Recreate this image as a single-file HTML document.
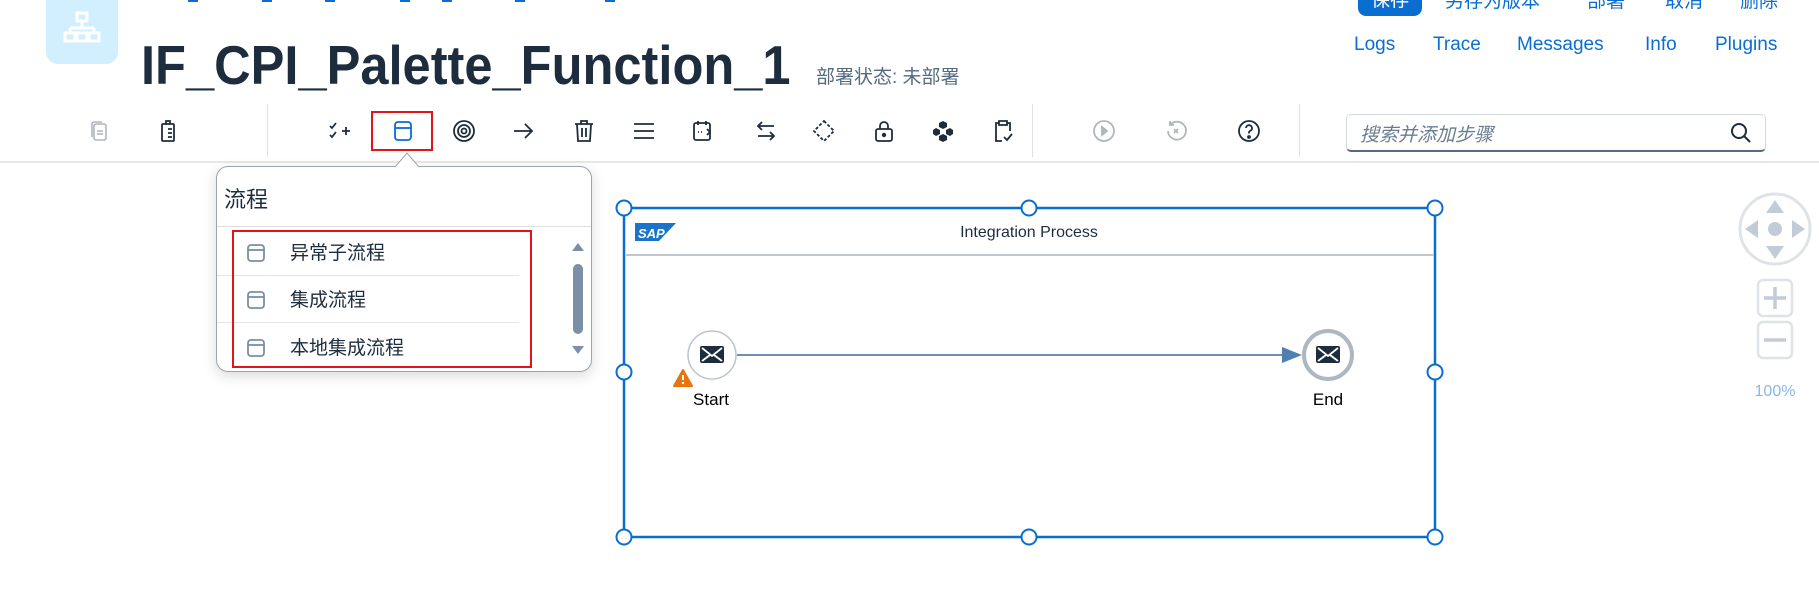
<!DOCTYPE html>
<html><head><meta charset="utf-8">
<style>
*{margin:0;padding:0;box-sizing:border-box}
body{width:1819px;height:614px;background:#fff;position:relative;overflow:hidden;font-family:"Liberation Sans","Noto Sans CJK SC",sans-serif}
.a{position:absolute;white-space:nowrap}
.lnk{color:#0a6ed1;font-size:19px;top:34px}
.top{color:#0a6ed1;font-size:19px;top:-14px}
.sep{position:absolute;top:104px;width:1px;height:53px;background:#e0e0e0}
.ic{position:absolute;top:119px;width:24px;height:24px}
.us{position:absolute;top:0;height:2px;width:10px;background:#0a6ed1}
</style></head><body>
<div class="us" style="left:188px"></div><div class="us" style="left:262px"></div><div class="us" style="left:325px"></div><div class="us" style="left:400px"></div><div class="us" style="left:442px"></div><div class="us" style="left:515px"></div><div class="us" style="left:605px"></div>
<div class="a" style="left:1358px;top:-10px;width:64px;height:26px;background:#0a6ed1;border-radius:8px;color:#fff;font-size:19px;text-align:center;line-height:22px">保存</div>
<div class="a top" style="left:1445px">另存为版本</div>
<div class="a top" style="left:1587px">部署</div>
<div class="a top" style="left:1665px">取消</div>
<div class="a top" style="left:1740px">删除</div>
<div class="a lnk" style="left:1354px">Logs</div>
<div class="a lnk" style="left:1433px">Trace</div>
<div class="a lnk" style="left:1517px">Messages</div>
<div class="a lnk" style="left:1645px">Info</div>
<div class="a lnk" style="left:1715px">Plugins</div>
<div class="a" style="left:46px;top:-10px;width:72px;height:74px;background:#d1efff;border-radius:12px"></div>
<svg class="a" style="left:62px;top:10px" width="40" height="40" viewBox="0 0 40 40" fill="none" stroke="#fff" stroke-width="3"><rect x="15" y="3" width="10" height="8"/><path d="M20 11v7M8 18h24M8 18v5M32 18v5"/><rect x="3" y="23" width="10" height="8"/><rect x="27" y="23" width="10" height="8"/><rect x="15" y="23" width="10" height="8"/></svg>
<div class="a" style="left:141px;top:34px;font-size:55px;font-weight:bold;color:#1d2d3e;transform:scaleX(0.92);transform-origin:left top;line-height:62px">IF_CPI_Palette_Function_1</div>
<div class="a" style="left:816px;top:62px;font-size:19px;color:#556b82">部署状态: 未部署</div>
<div class="sep" style="left:267px"></div>
<div class="sep" style="left:1032px"></div>
<div class="sep" style="left:1299px"></div>
<div class="a" style="left:0;top:161px;width:1819px;height:2px;background:#e8e8e8"></div>
<svg class="ic" style="left:87px" viewBox="0 0 24 24" fill="none" stroke="#b0b6bd" stroke-width="1.6"><rect x="7" y="5" width="12" height="16" rx="2"/><path d="M5 18V5a2 2 0 0 1 2-2h8M10 12h6M10 15h6"/></svg>
<svg class="ic" style="left:157px" viewBox="0 0 24 24" fill="none" stroke="#1d2d3e" stroke-width="1.8"><rect x="5" y="5" width="12" height="17" rx="1"/><path d="M9 5V2h4v3M11 10h4M11 14h4M11 18h4"/></svg>
<svg class="ic" style="left:328px" viewBox="0 0 24 24" fill="none" stroke="#1d2d3e" stroke-width="1.8"><path d="M2 7l2 2 4-5M2 16l2 2 4-5M14 12h8M18 8v8"/></svg>
<div class="a" style="left:371px;top:111px;width:62px;height:40px;border:2px solid #e3131b"></div>
<svg class="ic" style="left:391px" viewBox="0 0 24 24" fill="none" stroke="#0a6ed1" stroke-width="1.8"><rect x="4" y="3" width="16" height="18" rx="3"/><path d="M4 9h16"/></svg>
<svg class="ic" style="left:452px" viewBox="0 0 24 24" fill="none" stroke="#1d2d3e" stroke-width="1.8"><circle cx="12" cy="12" r="10"/><circle cx="12" cy="12" r="6"/><circle cx="12" cy="12" r="2.5"/></svg>
<svg class="ic" style="left:511px" viewBox="0 0 24 24" fill="none" stroke="#1d2d3e" stroke-width="1.8"><path d="M3 12h18M14 5l7 7-7 7"/></svg>
<svg class="ic" style="left:572px" viewBox="0 0 24 24" fill="none" stroke="#1d2d3e" stroke-width="1.8"><path d="M3 5h18M9 5V2h6v3M5 5l1 17h12l1-17M10 9v9M14 9v9"/></svg>
<svg class="ic" style="left:632px" viewBox="0 0 24 24" fill="none" stroke="#1d2d3e" stroke-width="1.8"><path d="M2 5h20M2 12h20M2 19h20"/></svg>
<svg class="ic" style="left:691px" viewBox="0 0 24 24" fill="none" stroke="#1d2d3e" stroke-width="1.8"><rect x="3" y="4" width="16" height="17" rx="2"/><path d="M7 2v4M15 2v4M7 13h1M10 13h1M16 10l3 3-3 3"/></svg>
<svg class="ic" style="left:754px" viewBox="0 0 24 24" fill="none" stroke="#1d2d3e" stroke-width="1.8"><path d="M20 7H4M8 3L4 7l4 4M4 17h16M16 13l4 4-4 4"/></svg>
<svg class="ic" style="left:812px" viewBox="0 0 24 24" fill="none" stroke="#1d2d3e" stroke-width="1.8" stroke-dasharray="3 2"><path d="M12 2l10 10-10 10L2 12z"/></svg>
<svg class="ic" style="left:872px" viewBox="0 0 24 24" fill="none" stroke="#1d2d3e" stroke-width="1.8"><rect x="4" y="10" width="16" height="12" rx="2"/><path d="M8 10V7a4 4 0 0 1 8 0v3"/><circle cx="12" cy="16" r="1.3" fill="#1d2d3e"/></svg>
<svg class="ic" style="left:931px" viewBox="0 0 24 24" fill="#1d2d3e"><path d="M12 2l4 2v4l-4 2-4-2V4zM5 9l4 2v4l-4 2-3-2v-4zM19 9l3 2v4l-3 2-4-2v-4zM12 15l4 2v4l-4 2-4-2v-4z"/></svg>
<svg class="ic" style="left:991px" viewBox="0 0 24 24" fill="none" stroke="#1d2d3e" stroke-width="1.8"><path d="M8 4H5v18h6M16 4h3v8M8 2h8v4H8zM13 18l3 3 5-6"/></svg>
<svg class="ic" style="left:1092px" viewBox="0 0 24 24" fill="none" stroke="#b0b6bd" stroke-width="1.8"><circle cx="12" cy="12" r="10"/><path d="M10 8l5 4-5 4z" fill="#b0b6bd"/></svg>
<svg class="ic" style="left:1164px" viewBox="0 0 24 24" fill="none" stroke="#b0b6bd" stroke-width="1.8"><path d="M6 6a9 9 0 1 1-2 6M6 2v4h4M10 10l4 4M14 10l-4 4"/></svg>
<svg class="ic" style="left:1237px" viewBox="0 0 24 24" fill="none" stroke="#1d2d3e" stroke-width="1.8"><circle cx="12" cy="12" r="10"/><path d="M9 9a3 3 0 1 1 4 3c-1 .5-1 1-1 2.5"/><circle cx="12" cy="18" r="1" fill="#1d2d3e"/></svg>
<div class="a" style="left:1346px;top:114px;width:420px;height:38px;border:1px solid #d5dadd;border-bottom:2px solid #556b82;border-radius:5px;background:#fff"></div>
<div class="a" style="left:1360px;top:120px;font-size:19px;font-style:italic;color:#6a7d8f">搜索并添加步骤</div>
<svg class="a" style="left:1730px;top:122px" width="22" height="22" viewBox="0 0 22 22" fill="none" stroke="#1d2d3e" stroke-width="2"><circle cx="9" cy="9" r="7"/><path d="M14 14l6 6"/></svg>
<div class="a" style="left:216px;top:166px;width:376px;height:206px;border:1px solid #9aa5b0;border-radius:12px;background:#fff;box-shadow:0 4px 14px rgba(0,0,0,.15)"></div>
<svg class="a" style="left:395px;top:152px" width="24" height="16" viewBox="0 0 24 16"><path d="M0 15L12 1l12 14" fill="#fff" stroke="#9aa5b0"/></svg>
<div class="a" style="left:224px;top:182px;font-size:22px;color:#1d2d3e">流程</div>
<div class="a" style="left:217px;top:226px;width:374px;height:1px;background:#ddd"></div>
<div class="a" style="left:217px;top:275px;width:302px;height:1px;background:#e5e5e5"></div>
<div class="a" style="left:217px;top:322px;width:302px;height:1px;background:#e5e5e5"></div>
<div class="a" style="left:232px;top:230px;width:300px;height:138px;border:2px solid #e3131b"></div>
<svg class="a" style="left:246px;top:243px" width="20" height="20" viewBox="0 0 20 20" fill="none" stroke="#7a8ea6" stroke-width="1.8"><rect x="2" y="2" width="16" height="16" rx="3"/><path d="M2 7h16"/></svg>
<svg class="a" style="left:246px;top:290px" width="20" height="20" viewBox="0 0 20 20" fill="none" stroke="#7a8ea6" stroke-width="1.8"><rect x="2" y="2" width="16" height="16" rx="3"/><path d="M2 7h16"/></svg>
<svg class="a" style="left:246px;top:338px" width="20" height="20" viewBox="0 0 20 20" fill="none" stroke="#7a8ea6" stroke-width="1.8"><rect x="2" y="2" width="16" height="16" rx="3"/><path d="M2 7h16"/></svg>
<div class="a" style="left:290px;top:238px;font-size:19px;color:#1d2d3e">异常子流程</div>
<div class="a" style="left:290px;top:285px;font-size:19px;color:#1d2d3e">集成流程</div>
<div class="a" style="left:290px;top:333px;font-size:19px;color:#1d2d3e">本地集成流程</div>
<svg class="a" style="left:570px;top:238px" width="16" height="122" viewBox="0 0 16 122" fill="#7b8fa6"><path d="M2 13L8 5l6 8z"/><rect x="3" y="26" width="10" height="70" rx="5"/><path d="M2 108l6 8 6-8z"/></svg>
<svg class="a" style="left:0;top:0" width="1819" height="614" viewBox="0 0 1819 614">
<rect x="624" y="208" width="811" height="329" fill="none" stroke="#0a6ed1" stroke-width="2.5"/>
<line x1="626" y1="255" x2="1434" y2="255" stroke="#bfc6cd" stroke-width="2"/>
<path d="M635 223h41l-17 18h-24z" fill="#1b74c9"/>
<text x="638" y="238" font-family="Liberation Sans" font-weight="bold" font-size="13" fill="#fff" font-style="italic">SAP</text>
<text x="1029" y="237" text-anchor="middle" font-family="Liberation Sans" font-size="16" fill="#1d2d3e">Integration Process</text>
<g fill="#fff" stroke="#0a6ed1" stroke-width="2">
<circle cx="624" cy="208" r="7.5"/><circle cx="1029" cy="208" r="7.5"/><circle cx="1435" cy="208" r="7.5"/>
<circle cx="624" cy="372" r="7.5"/><circle cx="1435" cy="372" r="7.5"/>
<circle cx="624" cy="537" r="7.5"/><circle cx="1029" cy="537" r="7.5"/><circle cx="1435" cy="537" r="7.5"/></g>
<line x1="737" y1="355" x2="1285" y2="355" stroke="#6d8fb5" stroke-width="2"/>
<path d="M1282 347l20 8-20 8z" fill="#4f7fb0"/>
<circle cx="712" cy="355" r="24" fill="#fff" stroke="#bcc3ca" stroke-width="1.5"/>
<rect x="700" y="346" width="24" height="17" rx="2" fill="#1d2d3e"/><path d="M702 348l10 8 10-8M702 361l8-6M722 361l-8-6" stroke="#fff" stroke-width="1.8" fill="none"/>
<path d="M683 370l9 16h-18z" fill="#e9730c" stroke="#e9730c" stroke-width="2" stroke-linejoin="round"/>
<path d="M683 375v5" stroke="#fff" stroke-width="2"/><circle cx="683" cy="383" r="1.2" fill="#fff"/>
<text x="711" y="405" text-anchor="middle" font-family="Liberation Sans" font-size="17" fill="#000">Start</text>
<circle cx="1328" cy="355" r="24" fill="#fff" stroke="#adb7c2" stroke-width="4"/>
<rect x="1316" y="346" width="24" height="17" rx="2" fill="#1d2d3e"/><path d="M1318 348l10 8 10-8M1318 361l8-6M1338 361l-8-6" stroke="#fff" stroke-width="1.8" fill="none"/>
<text x="1328" y="405" text-anchor="middle" font-family="Liberation Sans" font-size="17" fill="#000">End</text>
<circle cx="1775" cy="229" r="35" fill="#fff" stroke="#dfe3e8" stroke-width="3"/>
<g fill="#c2ccd7"><path d="M1775 200l-9 13h18z"/><path d="M1775 259l-9-13h18z"/><path d="M1745 229l13-9v18z"/><path d="M1805 229l-13-9v18z"/><circle cx="1775" cy="229" r="7"/></g>
<rect x="1758" y="280" width="34" height="36" rx="5" fill="#fff" stroke="#dfe3e8" stroke-width="2.5"/>
<path d="M1764 298h22M1775 287v22" stroke="#c2ccd7" stroke-width="3.5"/>
<rect x="1758" y="322" width="34" height="36" rx="5" fill="#fff" stroke="#dfe3e8" stroke-width="2.5"/>
<path d="M1764 340h22" stroke="#c2ccd7" stroke-width="3.5"/>
<text x="1775" y="396" text-anchor="middle" font-family="Liberation Sans" font-size="16" fill="#89b8e6">100%</text>
</svg>
</body></html>
